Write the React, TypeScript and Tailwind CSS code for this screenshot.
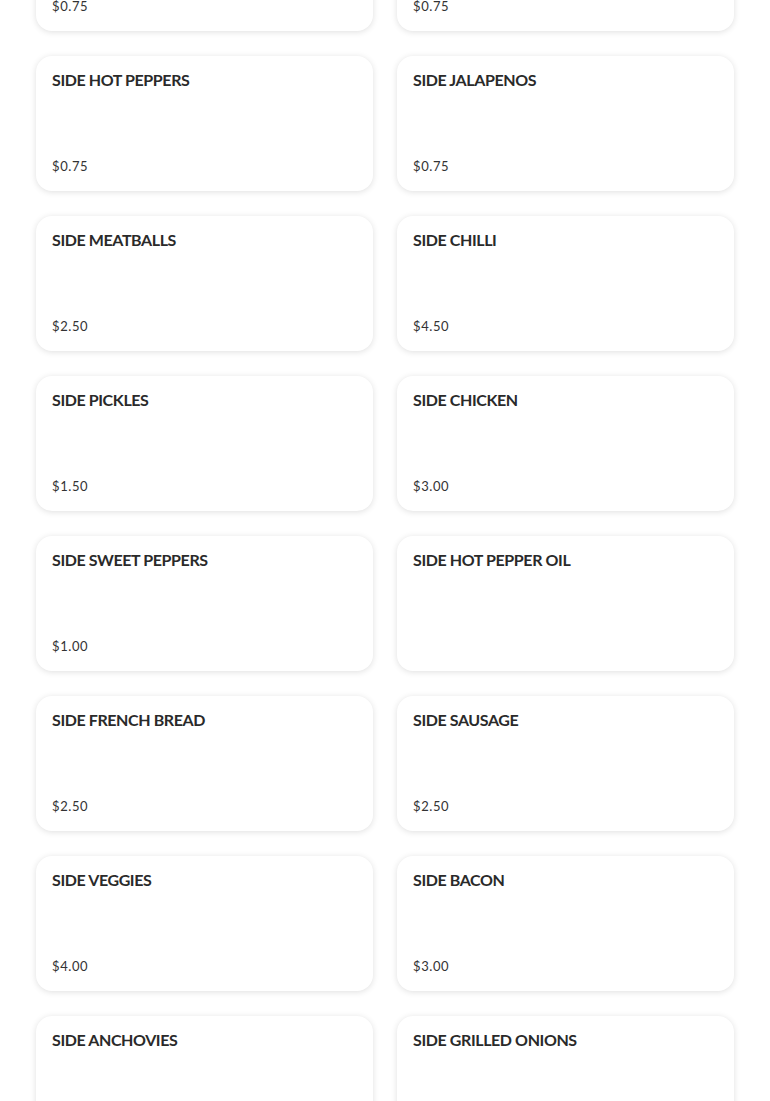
type Item = {
  name: string;
  price?: string;
};

const items: Item[] = [
  { name: "SIDE GARLIC", price: "$0.75" },
  { name: "SIDE ONIONS", price: "$0.75" },
  { name: "SIDE HOT PEPPERS", price: "$0.75" },
  { name: "SIDE JALAPENOS", price: "$0.75" },
  { name: "SIDE MEATBALLS", price: "$2.50" },
  { name: "SIDE CHILLI", price: "$4.50" },
  { name: "SIDE PICKLES", price: "$1.50" },
  { name: "SIDE CHICKEN", price: "$3.00" },
  { name: "SIDE SWEET PEPPERS", price: "$1.00" },
  { name: "SIDE HOT PEPPER OIL" },
  { name: "SIDE FRENCH BREAD", price: "$2.50" },
  { name: "SIDE SAUSAGE", price: "$2.50" },
  { name: "SIDE VEGGIES", price: "$4.00" },
  { name: "SIDE BACON", price: "$3.00" },
  { name: "SIDE ANCHOVIES", price: "$2.50" },
  { name: "SIDE GRILLED ONIONS", price: "$1.50" },
];

const MenuCard = ({ name, price }: Item) => (
  <div className="h-[135px] rounded-2xl bg-white px-4 pt-3 pb-[15px] flex flex-col justify-between shadow-[0_1px_6px_rgba(0,0,0,0.13)]">
    <h3 className="text-[16px] leading-6 font-bold text-[#2a2a2a] tracking-[-0.4px]">{name}</h3>
    <p className="text-[13px] leading-5 text-[#333] tracking-[0.6px]">{price ?? ""}</p>
  </div>
);

export default function App() {
  return (
    <div className="min-h-screen bg-white overflow-hidden font-['Lato',sans-serif]">
      {/* Grilla de productos */}
      <div className="grid grid-cols-2 gap-x-6 gap-y-[25px] px-9 -mt-[104px] pb-10">
        {items.map((item, i) => (
          <MenuCard key={i} {...item} />
        ))}
      </div>
    </div>
  );
}
